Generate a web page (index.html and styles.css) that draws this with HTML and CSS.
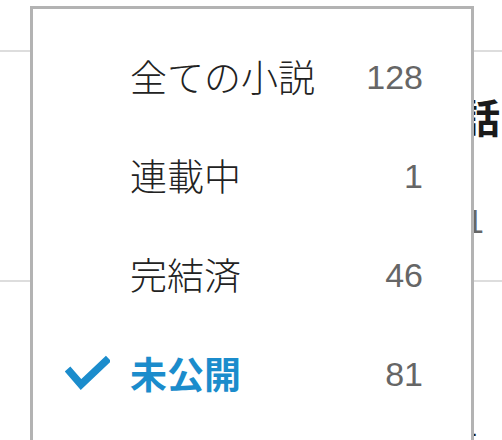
FILE: index.html
```html
<!DOCTYPE html>
<html lang="ja">
<head>
<meta charset="UTF-8">
<meta name="viewport" content="width=device-width, initial-scale=1.0">
<title>小説の絞り込み</title>
<link rel="stylesheet" href="styles.css">
</head>
<body>

<div class="page">
  <div class="bg-head"></div>
  <div class="bg-item">
    <div class="bg-title">話</div>
    <div class="bg-meta">1</div>
  </div>
  <div class="bg-item last">
    <div class="bg-mark">1</div>
  </div>
</div>

<div class="menu">
  <div class="menu-item">
    <span class="check"></span>
    <span class="label">全ての小説</span>
    <span class="count">128</span>
  </div>
  <div class="menu-item">
    <span class="check"></span>
    <span class="label">連載中</span>
    <span class="count">1</span>
  </div>
  <div class="menu-item">
    <span class="check"></span>
    <span class="label">完結済</span>
    <span class="count">46</span>
  </div>
  <div class="menu-item active">
    <span class="check">
      <svg width="45" height="40" viewBox="0 0 45 40">
        <polyline points="2.5,15 16,30.5 43.5,4.5" fill="none" stroke="#1b8ccc" stroke-width="7.5" stroke-linejoin="miter"></polyline>
      </svg>
    </span>
    <span class="label">未公開</span>
    <span class="count">81</span>
  </div>
</div>

</body>
</html>
```

FILE: styles.css
```css
body {
  margin: 0;
  height: 440px;
  overflow: hidden;
  position: relative;
  background-color: #fff;
  font-family: "Noto Sans CJK JP", sans-serif;
  color: #222;
}
.bg-head {
  height: 50px;
  border-bottom: 2px solid #ddd;
}
.bg-item {
  box-sizing: border-box;
  height: 230px;
  padding-top: 44px;
  border-bottom: 2px solid #ddd;
}
.bg-item.last {
  height: 158px;
  padding-top: 136px;
  border-bottom: none;
}
.bg-title {
  padding-left: 460px;
  font-size: 40px;
  font-weight: 700;
  line-height: 1;
  color: #1a1a1a;
}
.bg-meta {
  margin-top: 68px;
  padding-left: 465px;
  font-family: "Liberation Sans", Arial, sans-serif;
  font-size: 34px;
  line-height: 1;
  color: #666;
}
.bg-mark {
  padding-left: 464px;
  font-family: "Liberation Sans", Arial, sans-serif;
  font-size: 22px;
  font-weight: 700;
  line-height: 1;
  color: #1a1a1a;
}
.menu {
  position: absolute;
  left: 30px;
  top: 6px;
  width: 438px;
  height: 416px;
  padding-top: 18px;
  border: 3px solid #b3b3b3;
  border-bottom: none;
  background-color: #fff;
}
.menu-item {
  display: flex;
  align-items: center;
  height: 99px;
  padding: 0 48px 0 32px;
}
.check {
  display: flex;
  width: 45px;
  height: 40px;
  margin-right: 20px;
}
.label {
  flex: 1;
  font-size: 37px;
  font-weight: 300;
  line-height: 1;
  color: #222;
}
.count {
  font-family: "Liberation Sans", Arial, sans-serif;
  font-size: 34px;
  line-height: 1;
  color: #666;
}
.menu-item.active .label {
  color: #1b8ccc;
  font-weight: 700;
}
```
